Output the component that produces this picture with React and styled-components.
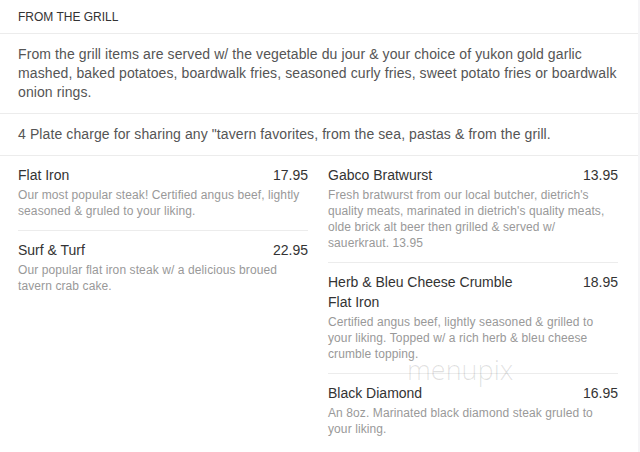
import React from "react";
import styled, { createGlobalStyle } from "styled-components";

const Global = createGlobalStyle`
  html, body { margin: 0; padding: 0; background: #f5f5f7; }
  body { font-family: "Liberation Sans", Arial, sans-serif; }
  * { box-sizing: border-box; }
`;

const Panel = styled.div`
  position: relative;
  width: 638px;
  background: #fff;
  padding-bottom: 9px;
`;

const Header = styled.div`
  height: 34px;
  padding: 0 18px;
  display: flex;
  align-items: center;
  font-size: 12px;
  color: #333;
  text-transform: uppercase;
  border-bottom: 1px solid #ececec;
`;

const Note = styled.p`
  margin: 0;
  padding: 11px 18px 11px 18px;
  font-size: 14px;
  line-height: 19px;
  letter-spacing: 0.1px;
  color: #555;
  border-bottom: 1px solid #ececec;
`;

const Columns = styled.div`
  display: grid;
  grid-template-columns: 290px 290px;
  column-gap: 20px;
  padding: 0 20px 0 18px;
  align-items: start;
`;

const Column = styled.div`
  display: flex;
  flex-direction: column;
`;

const Item = styled.div`
  padding: 9px 0 11px;
  border-bottom: ${(p) => (p.$last ? "none" : "1px solid #ececec")};
`;

const ItemHead = styled.div`
  display: flex;
  justify-content: space-between;
  align-items: flex-start;
  font-size: 14px;
  line-height: 20px;
  color: #333;
`;

const Name = styled.span`
  max-width: 210px;
`;

const Price = styled.span`
  flex: none;
`;

const Desc = styled.div`
  margin-top: 2px;
  font-size: 12px;
  line-height: 16px;
  letter-spacing: 0.1px;
  color: #999;
`;

const Watermark = styled.div`
  position: absolute;
  left: 407px;
  top: 351px;
  font-family: "Open Sans", "Liberation Sans", sans-serif;
  font-weight: 300;
  font-size: 27px;
  color: rgba(0, 0, 0, 0.12);
  pointer-events: none;
`;

const left = [
  {
    name: "Flat Iron",
    price: "17.95",
    desc: "Our most popular steak! Certified angus beef, lightly seasoned & gruled to your liking.",
  },
  {
    name: "Surf & Turf",
    price: "22.95",
    desc: "Our popular flat iron steak w/ a delicious broued tavern crab cake.",
  },
];

const right = [
  {
    name: "Gabco Bratwurst",
    price: "13.95",
    desc: "Fresh bratwurst from our local butcher, dietrich's quality meats, marinated in dietrich's quality meats, olde brick alt beer then grilled & served w/ sauerkraut. 13.95",
  },
  {
    name: "Herb & Bleu Cheese Crumble Flat Iron",
    price: "18.95",
    desc: "Certified angus beef, lightly seasoned & grilled to your liking. Topped w/ a rich herb & bleu cheese crumble topping.",
  },
  {
    name: "Black Diamond",
    price: "16.95",
    desc: "An 8oz. Marinated black diamond steak gruled to your liking.",
  },
];

function MenuColumn({ items }) {
  return (
    <Column>
      {items.map((it, i) => (
        <Item key={it.name} $last={i === items.length - 1}>
          <ItemHead>
            <Name>{it.name}</Name>
            <Price>{it.price}</Price>
          </ItemHead>
          <Desc>{it.desc}</Desc>
        </Item>
      ))}
    </Column>
  );
}

export default function App() {
  return (
    <>
      <Global />
      <Panel>
        <Header>From the Grill</Header>
        <Note>
          From the grill items are served w/ the vegetable du jour &amp; your choice of yukon gold garlic
          mashed, baked potatoes, boardwalk fries, seasoned curly fries, sweet potato fries or boardwalk
          onion rings.
        </Note>
        <Note>4 Plate charge for sharing any "tavern favorites, from the sea, pastas &amp; from the grill.</Note>
        <Columns>
          <MenuColumn items={left} />
          <MenuColumn items={right} />
        </Columns>
        <Watermark>menupix</Watermark>
      </Panel>
    </>
  );
}
